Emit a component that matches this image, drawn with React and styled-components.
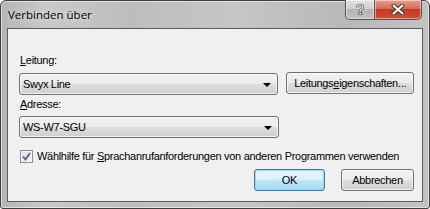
import React from "react"
import styled, { createGlobalStyle } from "styled-components"

const GlobalStyle = createGlobalStyle`
    html, body {
        margin: 0;
        padding: 0;
        background: #ffffff;
    }
    body {
        font-family: "Liberation Sans", Arial, sans-serif;
        font-size: 11px;
        letter-spacing: -0.3px;
        color: #000;
    }
`

const Window = styled.div`
    width: 430px;
    height: 209px;
    box-sizing: border-box;
    border: 1px solid #3f3f3f;
    border-radius: 6px 6px 3px 3px;
    background: linear-gradient(90deg, #b4b4b4 0%, #c9c9c9 10%, #bdbdbd 30%, #c6c6c6 55%, #b8b8b8 80%, #c2c2c2 100%);
    display: flex;
    flex-direction: column;
    padding: 0 6px 6px 6px;
    box-shadow: inset 0 0 0 1px rgba(255,255,255,0.55);
`

const TitleBar = styled.div`
    height: 27px;
    display: flex;
    align-items: flex-start;
    justify-content: space-between;
`

const Title = styled.div`
    font-family: "Open Sans", "Noto Sans", sans-serif;
    font-size: 11.5px;
    letter-spacing: 0;
    color: #000;
    padding: 6px 0 0 1px;
    text-shadow: 0 0 6px rgba(255,255,255,0.9);
`

const Caption = styled.div`
    display: flex;
    margin-right: 1px;
    margin-top: -1px;
`

const CapButton = styled.div`
    height: 20px;
    width: ${p => p.$w}px;
    box-sizing: border-box;
    border: 1px solid #555;
    border-top: none;
    display: flex;
    align-items: center;
    justify-content: center;
    background: ${p => p.$close
        ? "linear-gradient(#e8a08e 0%, #d86a55 45%, #c43a22 50%, #d44d33 100%)"
        : "linear-gradient(#e4e4e4 0%, #cfcfcf 45%, #b3b3b3 50%, #c2c2c2 100%)"};
    border-radius: ${p => p.$close ? "0 0 5px 0" : "0 0 0 5px"};
    box-shadow: inset 0 0 0 1px rgba(255,255,255,0.45);
    ${p => p.$close && "border-left: none;"}
`

const Client = styled.div`
    flex: 1;
    border: 1px solid #5c5c5c;
    background: #f0f0f0;
    padding: 25px 8px 0 11px;
    display: flex;
    flex-direction: column;
`

const Label = styled.div`
    height: 13px;
    line-height: 13px;
    padding-left: 1px;
    margin-bottom: ${p => p.$mb || 5}px;
    color: #000;
`

const Row = styled.div`
    display: flex;
    align-items: flex-start;
    gap: 8px;
    margin-bottom: ${p => p.$mb || 0}px;
`

const Combo = styled.div`
    width: 260px;
    height: 22px;
    box-sizing: border-box;
    border: 1px solid #707070;
    border-radius: 3px;
    background: linear-gradient(#f2f2f2 0%, #ebebeb 48%, #dddddd 52%, #cfcfcf 100%);
    box-shadow: inset 0 0 0 1px rgba(255,255,255,0.7);
    display: flex;
    align-items: center;
    justify-content: space-between;
    padding: 0 6px 0 3px;
    margin-top: ${p => p.$mt || 0}px;
`

const Arrow = styled.span`
    width: 0;
    height: 0;
    border-left: 4px solid transparent;
    border-right: 4px solid transparent;
    border-top: 4px solid #000;
    margin-top: 1px;
`

const Button = styled.div`
    width: ${p => p.$w}px;
    height: 22px;
    box-sizing: border-box;
    border: 1px solid ${p => p.$default ? "#3c7fb1" : "#707070"};
    border-radius: 3px;
    background: ${p => p.$default
        ? "linear-gradient(#eaf6fd 0%, #d9f0fc 48%, #bee6fd 52%, #a7d9f5 100%)"
        : "linear-gradient(#f2f2f2 0%, #ebebeb 48%, #dddddd 52%, #cfcfcf 100%)"};
    box-shadow: inset 0 0 0 1px ${p => p.$default ? "rgba(143,214,245,0.9)" : "rgba(255,255,255,0.7)"};
    display: flex;
    align-items: center;
    justify-content: center;
    white-space: nowrap;
    margin-top: ${p => p.$mt || 0}px;
`

const CheckRow = styled.label`
    display: flex;
    align-items: center;
    gap: 4px;
    padding-left: 1px;
    margin-top: 11px;
    height: 14px;
    white-space: nowrap;
`

const CheckBox = styled.span`
    width: 13px;
    height: 13px;
    flex: none;
    box-sizing: border-box;
    border: 1px solid #8e8f8f;
    background: linear-gradient(135deg, #dcdcdc 0%, #f6f6f6 100%);
    box-shadow: inset 0 0 0 1px #f4f4f4;
    display: flex;
    align-items: center;
    justify-content: center;
`

const Footer = styled.div`
    display: flex;
    justify-content: flex-end;
    gap: 16px;
    margin-top: 6px;
`

const Key = styled.u`
    text-decoration: underline;
    text-underline-offset: 1px;
`

export default function App() {
    return (
        <>
            <GlobalStyle />
            <Window>
                <TitleBar>
                    <Title>Verbinden über</Title>
                    <Caption>
                        <CapButton $w={30}>
                            <svg width="10" height="11" viewBox="0 0 10 11">
                                <path d="M2 3.5 C2 1.5 3.5 1 5 1 C6.8 1 8 2 8 3.5 C8 5 6.3 5.3 5.3 6.3 L5.3 7" stroke="#444" strokeWidth="2.4" fill="none" />
                                <path d="M2 3.5 C2 1.5 3.5 1 5 1 C6.8 1 8 2 8 3.5 C8 5 6.3 5.3 5.3 6.3 L5.3 7" stroke="#fff" strokeWidth="1.1" fill="none" />
                                <rect x="3.8" y="8.3" width="3" height="2.5" fill="#fff" stroke="#444" strokeWidth="0.8" />
                            </svg>
                        </CapButton>
                        <CapButton $w={47} $close>
                            <svg width="14" height="11" viewBox="0 0 14 11">
                                <path d="M2.5 1.5 L11.5 9.5 M11.5 1.5 L2.5 9.5" stroke="#3a3a3a" strokeWidth="4" strokeLinecap="round" />
                                <path d="M2.5 1.5 L11.5 9.5 M11.5 1.5 L2.5 9.5" stroke="#fff" strokeWidth="2" strokeLinecap="round" />
                            </svg>
                        </CapButton>
                    </Caption>
                </TitleBar>
                <Client>
                    <Label><Key>L</Key>eitung:</Label>
                    <Row $mb={3}>
                        <Combo $mt={1}>
                            <span>Swyx Line</span>
                            <Arrow />
                        </Combo>
                        <Button $w={128}>Leitungs<Key>e</Key>igenschaften...</Button>
                    </Row>
                    <Label><Key>A</Key>dresse:</Label>
                    <Row>
                        <Combo>
                            <span>WS-W7-SGU</span>
                            <Arrow />
                        </Combo>
                    </Row>
                    <CheckRow>
                        <CheckBox>
                            <svg width="9" height="9" viewBox="0 0 9 9">
                                <path d="M1 4.5 L3.5 7.5 L8 1" stroke="#4a5f97" strokeWidth="1.8" fill="none" />
                            </svg>
                        </CheckBox>
                        <span>Wählhilfe für <Key>S</Key>prachanrufanforderungen von anderen Programmen verwenden</span>
                    </CheckRow>
                    <Footer>
                        <Button $w={71} $default>OK</Button>
                        <Button $w={73}>Abbrechen</Button>
                    </Footer>
                </Client>
            </Window>
        </>
    )
}
